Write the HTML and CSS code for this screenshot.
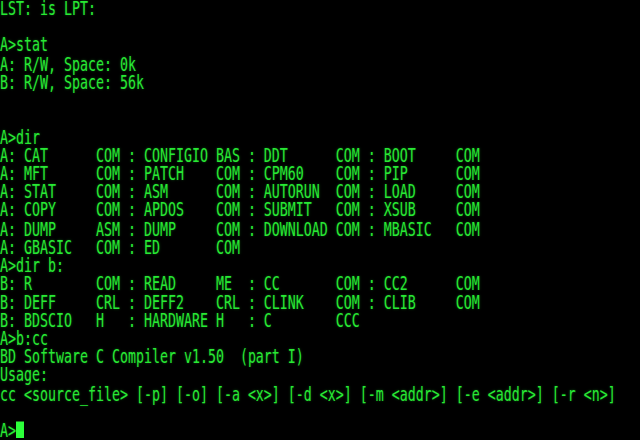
FILE: index.html
```html
<!DOCTYPE html>
<html>
<head>
<meta charset="utf-8">
<link rel="stylesheet" href="styles.css">
</head>
<body>
<div class="screen">
<pre class="term">LST: is LPT:

A&gt;stat
A: R/W, Space: 0k
B: R/W, Space: 56k


A&gt;dir
A: CAT      COM : CONFIGIO BAS : DDT      COM : BOOT     COM
A: MFT      COM : PATCH    COM : CPM60    COM : PIP      COM
A: STAT     COM : ASM      COM : AUTORUN  COM : LOAD     COM
A: COPY     COM : APDOS    COM : SUBMIT   COM : XSUB     COM
A: DUMP     ASM : DUMP     COM : DOWNLOAD COM : MBASIC   COM
A: GBASIC   COM : ED       COM
A&gt;dir b:
B: R        COM : READ     ME  : CC       COM : CC2      COM
B: DEFF     CRL : DEFF2    CRL : CLINK    COM : CLIB     COM
B: BDSCIO   H   : HARDWARE H   : C        CCC
A&gt;b:cc
BD Software C Compiler v1.50  (part I)
Usage:
cc &lt;source_file&gt; [-p] [-o] [-a &lt;x&gt;] [-d &lt;x&gt;] [-m &lt;addr&gt;] [-e &lt;addr&gt;] [-r &lt;n&gt;]

A&gt;<span class="cursor"></span></pre>
</div>
</body>
</html>
```
FILE: styles.css
```css
html, body {
  margin: 0;
  padding: 0;
  background: #000;
}
.screen {
  width: 640px;
  height: 440px;
  overflow: hidden;
  background: #000;
}
.term {
  margin: 0;
  font-family: "DejaVu Sans Mono", "Liberation Mono", monospace;
  font-size: 13.29px;
  line-height: 12.222px;
  color: #28e834;
  text-shadow: 0 0 2px rgba(40, 255, 60, 0.35);
  transform: scaleY(1.5);
  transform-origin: 0 0;
  white-space: pre;
}
.cursor {
  display: inline-block;
  width: 8px;
  height: 11.4px;
  vertical-align: top;
  background: #2cff3a;
}
```
